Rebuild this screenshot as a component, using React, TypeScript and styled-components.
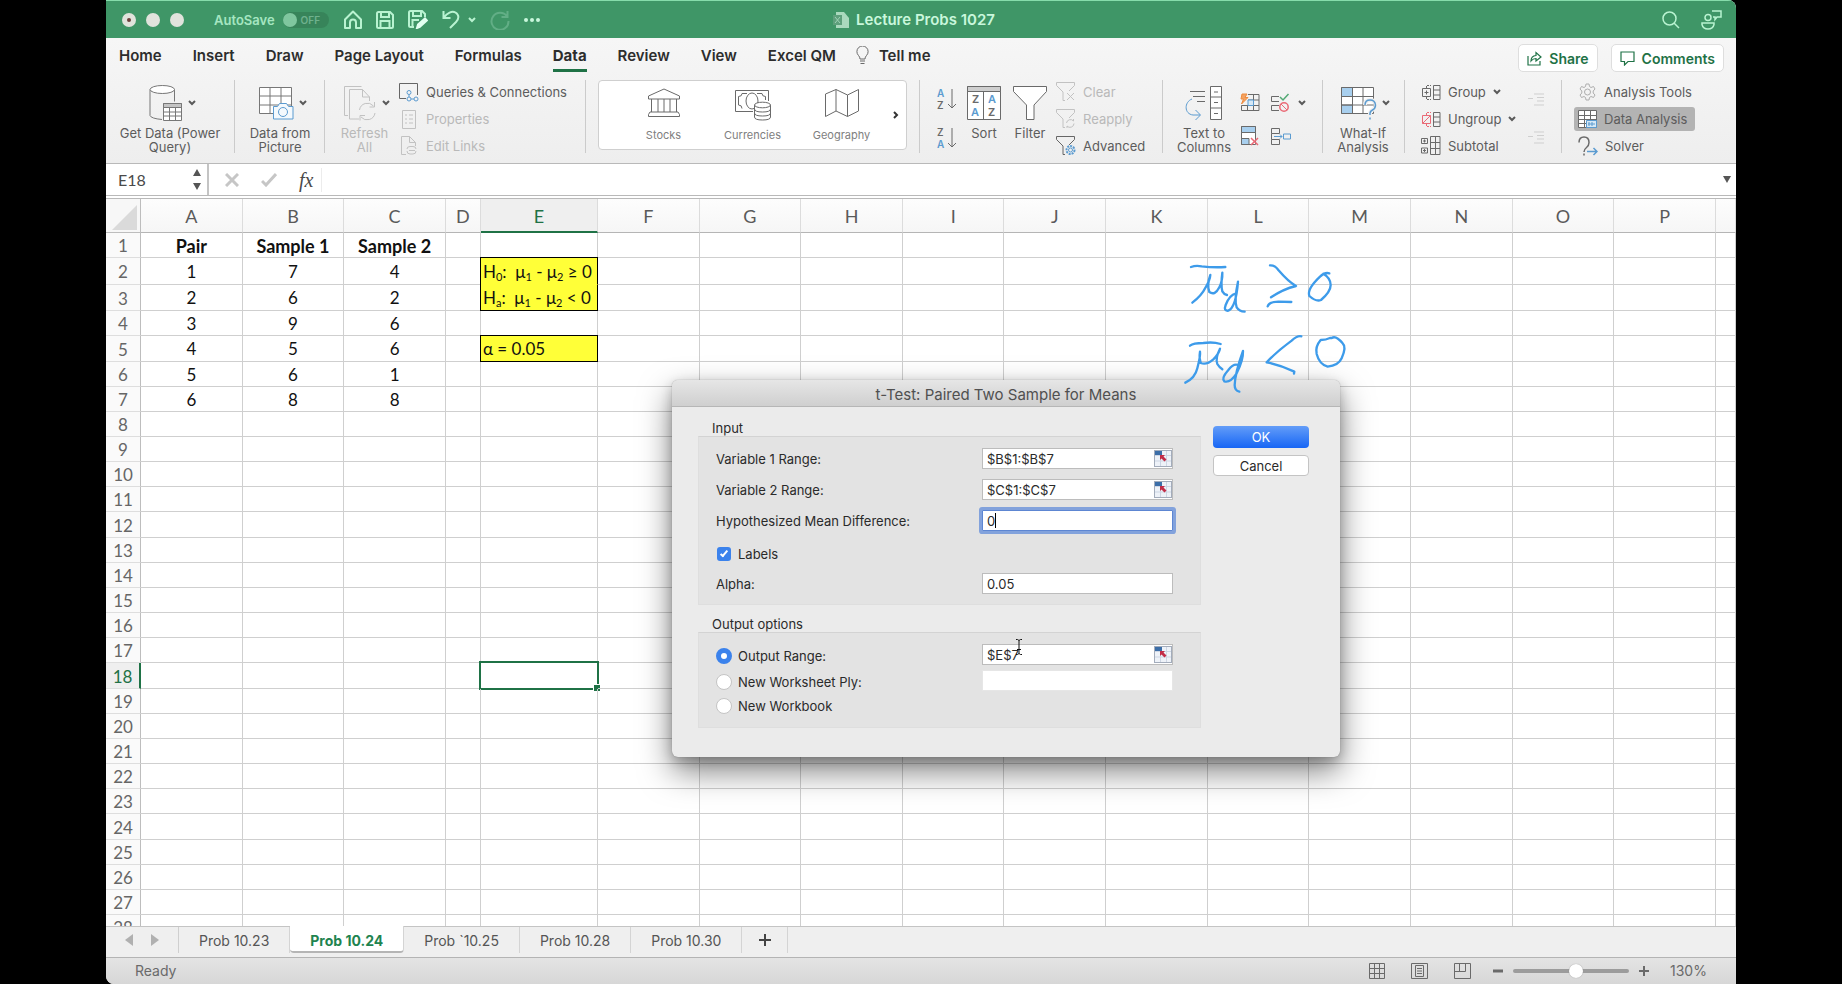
import React from 'react';
import styled, { createGlobalStyle, css } from 'styled-components';

const ui = `Inter, "Liberation Sans", sans-serif`;
const sheetFont = `Lato, "Noto Sans", sans-serif`;
const green = '#1f7246';
const line = '#cfcfcf';
const grey = '#6a6a6a';
const blue = '#5b9bd0';

const GlobalStyle = createGlobalStyle`
  *, *::before, *::after { box-sizing: border-box; }
  body { margin: 0; background: #000; font-family: ${ui}; }
  button, input { font: inherit; color: inherit; }
  button { border: 0; padding: 0; background: none; cursor: default; }
  svg { display: block; flex: none; }
`;

const Stage = styled.div`
  height: 100vh;
  padding: 0 106px;
  background: #000;
`;

const Window = styled.div`
  position: relative;
  display: flex;
  flex-direction: column;
  height: 100%;
  background: #fff;
  overflow: hidden;
  border-radius: 0 8px 0 8px;
`;

/* ---------- title bar ---------- */

const TitleBar = styled.header`
  display: grid;
  grid-template-columns: 1fr auto 1fr;
  align-items: center;
  height: 38px;
  flex: none;
  padding: 0 14px 0 16px;
  background: #3f9667;
  border-top: 1px solid #86dcab;
  color: #c9f7dc;
`;

const TitleGroup = styled.div<{ $end?: boolean; $gap: number }>`
  display: flex;
  align-items: center;
  gap: ${(p) => p.$gap}px;
  justify-content: ${(p) => (p.$end ? 'flex-end' : 'flex-start')};
`;

const Light = styled.button`
  width: 14px;
  height: 14px;
  border-radius: 50%;
  background: #e0e3dc;
  display: grid;
  place-items: center;
`;

const LightDot = styled.i`
  width: 4px;
  height: 4px;
  border-radius: 50%;
  background: #6b3f3a;
`;

const AutoSave = styled.span`
  margin-left: 20px;
  font-size: 13px;
  font-weight: 600;
  color: #a5e6c1;
`;

const Toggle = styled.button`
  display: flex;
  align-items: center;
  gap: 4px;
  width: 46px;
  height: 16px;
  margin: 0 15px 0 8px;
  border-radius: 8px;
  background: #37845a;
  color: #6fb18e;
  font-size: 10px;
  font-weight: 600;
`;

const Knob = styled.i`
  width: 14px;
  height: 14px;
  border-radius: 50%;
  background: #7fc79f;
`;

const DocTitle = styled.h1`
  display: flex;
  align-items: center;
  gap: 7px;
  margin: 0 16px 0 0;
  font-size: 15px;
  font-weight: 600;
`;

const BarButton = styled.button`
  display: flex;
  align-items: center;
`;

/* ---------- ribbon ---------- */

const Ribbon = styled.div`
  flex: none;
  height: 126px;
  background: linear-gradient(#f6f6f6, #eeeeee);
  border-bottom: 1px solid #b9b9b9;
`;

const TabRow = styled.nav`
  display: flex;
  align-items: flex-start;
  gap: 31px;
  height: 42px;
  padding: 0 12px 0 13px;
`;

const RibbonTab = styled.button<{ $active?: boolean }>`
  height: 34px;
  padding-top: 3px;
  border-bottom: 3px solid ${(p) => (p.$active ? green : 'transparent')};
  font-size: 15px;
  font-weight: ${(p) => (p.$active ? 700 : 600)};
  color: #2d2d2d;
`;

const TellMe = styled(RibbonTab)`
  display: flex;
  align-items: center;
  gap: 10px;
  margin-left: -11px;
`;

const TabActions = styled.div`
  display: flex;
  gap: 13px;
  margin-left: auto;
  padding-top: 6px;
`;

const ActionButton = styled.button`
  display: flex;
  align-items: center;
  gap: 7px;
  height: 28px;
  padding: 0 8px;
  border: 1px solid #dedede;
  border-radius: 5px;
  background: #fff;
  color: ${green};
  font-size: 14px;
  font-weight: 600;
`;

const Groups = styled.div`
  display: flex;
  height: 73px;
`;

const Group = styled.section<{ $w?: number; $pad?: number }>`
  display: flex;
  align-items: flex-start;
  flex: ${(p) => (p.$w ? `0 0 ${p.$w}px` : '1 1 auto')};
  padding-left: ${(p) => p.$pad ?? 12}px;
  border-right: ${(p) => (p.$w ? '1px solid #cbcbcb' : '0')};
`;

const BigButton = styled.button<{ $w: number; $dim?: boolean }>`
  display: flex;
  flex-direction: column;
  align-items: center;
  flex: none;
  width: ${(p) => p.$w}px;
  padding-top: 4px;
  font-size: 13px;
  line-height: 14px;
  color: ${(p) => (p.$dim ? '#b9b9b9' : '#5c5c5c')};
`;

const BigIcon = styled.span<{ $chevron?: boolean }>`
  display: flex;
  align-items: center;
  gap: 5px;
  height: 38px;
  margin-bottom: 4px;
  padding-left: ${(p) => (p.$chevron ? 4 : 0)}px;
`;

const SmallList = styled.div`
  display: flex;
  flex-direction: column;
  align-items: flex-start;
  gap: 3px;
`;

const SmallButton = styled.button<{ $dim?: boolean; $on?: boolean }>`
  display: flex;
  align-items: center;
  gap: 7px;
  height: 24px;
  padding: 0 8px 0 4px;
  border-radius: 3px;
  font-size: 13px;
  color: ${(p) => (p.$dim ? '#b9b9b9' : '#5c5c5c')};
  background: ${(p) => (p.$on ? '#b3b3b3' : 'transparent')};
  white-space: nowrap;
`;

const IconColumn = styled.div<{ $top?: number; $gap?: number; $left?: number }>`
  display: flex;
  flex-direction: column;
  gap: ${(p) => p.$gap ?? 13}px;
  padding-top: ${(p) => p.$top ?? 6}px;
  margin-left: ${(p) => p.$left ?? 0}px;
`;

const IconButton = styled.button`
  display: flex;
  align-items: center;
  gap: 8px;
`;

const Gallery = styled.div`
  display: flex;
  align-items: stretch;
  width: 309px;
  height: 70px;
  border: 1px solid #cfcfcf;
  border-radius: 4px;
  background: #fff;
  padding-left: 20px;
`;

const GalleryItem = styled.button`
  display: flex;
  flex-direction: column;
  align-items: center;
  width: 89px;
  padding-top: 6px;
  font-size: 11px;
  line-height: 14px;
  color: #808080;
`;

const GalleryIcon = styled.span`
  display: grid;
  place-items: center;
  height: 32px;
  margin-bottom: 9px;
`;

const GalleryMore = styled.button`
  flex: 1;
  display: grid;
  place-items: center;
  color: #333;
`;

/* ---------- formula bar ---------- */

const FormulaBar = styled.div`
  display: flex;
  align-items: center;
  flex: none;
  height: 35px;
  background: #fff;
  border-bottom: 4px double #b9b9b9;
  color: #4a4a4a;
`;

const NameBox = styled.div`
  display: flex;
  align-items: center;
  justify-content: space-between;
  width: 103px;
  height: 100%;
  padding: 0 6px 0 12px;
  border-right: 2px solid #c4c4c4;
`;

const NameInput = styled.input`
  width: 60px;
  border: 0;
  padding: 0;
  outline: 0;
  background: none;
  font-family: ${sheetFont};
  font-size: 16px;
  line-height: 20px;
`;

const FxTools = styled.div`
  display: flex;
  align-items: center;
  gap: 22px;
  padding: 0 8px 0 16px;
  border-right: 1px solid #ececec;
`;

const Fx = styled.button`
  font-family: "Liberation Serif", serif;
  font-style: italic;
  font-size: 20px;
  line-height: 24px;
`;

const FormulaInput = styled.input`
  flex: 1;
  min-width: 0;
  border: 0;
  outline: 0;
  background: none;
`;

/* ---------- grid ---------- */

const SheetArea = styled.main`
  flex: 1 1 0;
  min-height: 0;
  overflow: hidden;
  background: #fff;
`;

const Sheet = styled.table`
  width: 100%;
  table-layout: fixed;
  border-collapse: separate;
  border-spacing: 0;
  font-family: ${sheetFont};
  font-size: 17px;
  line-height: 20px;
  color: #111;
`;

const Corner = styled.td`
  height: 34px;
  padding: 0;
  border-right: 1px solid #bdbdbd;
  border-bottom: 1px solid #bdbdbd;
  background: #f7f7f7;
`;

const ColHead = styled.th<{ $on?: boolean }>`
  padding: 1px 0 0;
  font-weight: 400;
  font-size: 18px;
  background: ${(p) => (p.$on ? '#efefef' : 'linear-gradient(#fdfdfd, #f6f6f6)')};
  color: ${(p) => (p.$on ? green : '#5a5a5a')};
  border-right: 1px solid #dcdcdc;
  border-bottom: ${(p) => (p.$on ? `2px solid ${green}` : '1px solid #b5b5b5')};
`;

const RowHead = styled.th<{ $on?: boolean }>`
  padding: 2px 0 0;
  font-weight: 400;
  background: ${(p) => (p.$on ? '#efefef' : '#fafafa')};
  color: ${(p) => (p.$on ? green : '#666')};
  border-right: ${(p) => (p.$on ? `2px solid ${green}` : '1px solid #bdbdbd')};
  border-bottom: 1px solid #dedede;
`;

const Row = styled.tr<{ $h: number }>`
  height: ${(p) => p.$h}px;
`;

const Cell = styled.td<{ $bold?: boolean; $note?: boolean; $top?: boolean; $bottom?: boolean }>`
  position: relative;
  padding: 1px 0 0;
  text-align: center;
  white-space: nowrap;
  font-weight: ${(p) => (p.$bold ? 700 : 400)};
  font-size: ${(p) => (p.$bold ? 18 : 17)}px;
  border-right: 1px solid ${line};
  border-bottom: 1px solid ${line};
  ${(p) =>
    p.$note &&
    css`
      padding-left: 2px;
      text-align: left;
      background: #ffff38;
      border-right-color: #000;
      border-bottom-color: ${p.$bottom ? '#000' : '#ffff38'};
      box-shadow: ${p.$top ? '-1px 0 #000, 0 -1px #000, -1px -1px #000' : '-1px 0 #000'};
    `}
  sub {
    font-size: 11px;
    line-height: 0;
    vertical-align: -3px;
  }
`;

const Selection = styled.div`
  position: absolute;
  inset: -2px;
  border: 2px solid ${green};
  &::after {
    content: '';
    position: absolute;
    right: -3px;
    bottom: -3px;
    width: 6px;
    height: 6px;
    background: ${green};
    box-shadow: -1px -1px #fff;
  }
`;

/* ---------- bottom bars ---------- */

const TabStrip = styled.div`
  display: flex;
  align-items: flex-start;
  flex: none;
  height: 31px;
  background: #efefef;
  border-top: 1px solid #c4c4c4;
`;

const TabArrows = styled.div`
  display: flex;
  align-items: center;
  justify-content: center;
  gap: 18px;
  width: 73px;
  height: 26px;
  border-right: 1px solid #cfcfcf;
`;

const SheetTab = styled.button<{ $on?: boolean }>`
  height: ${(p) => (p.$on ? 27 : 26)}px;
  margin-top: ${(p) => (p.$on ? -1 : 0)}px;
  padding: ${(p) => (p.$on ? 3 : 0)}px 20px 0;
  font-size: 14px;
  font-weight: ${(p) => (p.$on ? 700 : 400)};
  color: ${(p) => (p.$on ? '#1f8450' : '#555')};
  background: ${(p) => (p.$on ? '#fff' : 'transparent')};
  border-right: 1px solid #d4d4d4;
  border-bottom: ${(p) => (p.$on ? '2px solid #b5b5b5' : '0')};
  border-radius: ${(p) => (p.$on ? '0 0 4px 4px' : '0')};
`;

const AddTab = styled.button`
  display: grid;
  place-items: center;
  width: 46px;
  height: 26px;
  border-right: 1px solid #d4d4d4;
  color: #444;
`;

const StatusBar = styled.footer`
  display: flex;
  align-items: center;
  flex: none;
  height: 27px;
  padding: 0 29px;
  background: linear-gradient(#e4e4e4, #d7d7d7);
  border-top: 1px solid #b4b4b4;
  color: ${grey};
  font-size: 14px;
  line-height: 16px;
`;

const StatusRight = styled.div`
  display: flex;
  align-items: center;
  margin-left: auto;
`;

const Views = styled.div`
  display: flex;
  gap: 26px;
  margin-right: 22px;
`;

const ZoomRange = styled.input`
  appearance: none;
  width: 116px;
  height: 4px;
  margin: 0 10px;
  border-radius: 2px;
  background: #9c9c9c;
  &::-webkit-slider-thumb {
    appearance: none;
    width: 14px;
    height: 14px;
    border-radius: 50%;
    background: #fff;
    box-shadow: 0 0 1px #888;
  }
`;

const ZoomText = styled.output`
  width: 37px;
  margin-left: 21px;
`;

/* ---------- dialog ---------- */

const Dialog = styled.section`
  position: absolute;
  top: 380px;
  left: 566px;
  width: 668px;
  background: #ebebeb;
  border-radius: 6px;
  box-shadow: 0 0 1px #777, 0 14px 32px rgba(0, 0, 0, 0.5), 0 4px 12px rgba(0, 0, 0, 0.2);
  color: #2a2a2a;
  font-size: 13px;
  line-height: 16px;
`;

const DialogTitle = styled.h2`
  margin: 0;
  height: 27px;
  padding-top: 2px;
  text-align: center;
  font-size: 15px;
  line-height: 25px;
  font-weight: 400;
  color: #505050;
  background: linear-gradient(#e6e6e6, #cfcfcf);
  border-bottom: 1px solid #b6b6b6;
  border-radius: 6px 6px 0 0;
`;

const DialogBody = styled.form`
  display: flex;
  gap: 12px;
  padding: 13px 31px 29px 26px;
`;

const Panels = styled.div`
  flex: 1;
`;

const Panel = styled.fieldset`
  margin: 0 0 11px;
  padding: 0;
  border: 0;
  min-width: 0;
  &:last-child { margin-bottom: 0; }
`;

const PanelTitle = styled.legend`
  padding: 0 0 0 14px;
`;

const PanelBox = styled.div<{ $top: number; $bottom: number }>`
  padding: ${(p) => p.$top}px 27px ${(p) => p.$bottom}px 17px;
  background: #e3e3e3;
  border: 1px solid #dedede;
  border-top-color: #d3d3d3;
`;

const FieldRow = styled.div<{ $h: number }>`
  display: flex;
  align-items: center;
  justify-content: space-between;
  height: ${(p) => p.$h}px;
`;

const OutputGrid = styled.div`
  display: flex;
  justify-content: space-between;
`;

const Stack = styled.div<{ $gap: number }>`
  display: flex;
  flex-direction: column;
  gap: ${(p) => p.$gap}px;
`;

const Field = styled.div<{ $focus?: boolean; $plain?: boolean }>`
  position: relative;
  display: flex;
  align-items: center;
  width: 191px;
  height: 21px;
  background: #fff;
  border: 1px solid ${(p) => (p.$plain ? '#e6e6e6' : '#bcbcbc')};
  ${(p) =>
    p.$focus &&
    css`
      border-color: #5d86d2;
      box-shadow: 0 0 0 3px #82a2dc;
      border-radius: 1px;
    `}
`;

const TextInput = styled.input`
  flex: 1;
  min-width: 0;
  height: 100%;
  padding: 0 4px;
  border: 0;
  outline: 0;
  background: none;
  font-size: 13px;
`;

const Caret = styled.i`
  position: absolute;
  left: 12px;
  top: 2px;
  width: 1px;
  height: 15px;
  background: #000;
`;

const Choice = styled.label`
  display: flex;
  align-items: center;
  gap: 6px;
  height: 20px;
`;

const Check = styled.input`
  appearance: none;
  width: 14px;
  height: 14px;
  margin: 0 1px;
  border-radius: 3px;
  background: #3b82ec;
  display: grid;
  place-items: center;
  &::after {
    content: '';
    width: 4px;
    height: 8px;
    margin-top: -2px;
    border: solid #fff;
    border-width: 0 2px 2px 0;
    transform: rotate(40deg);
  }
`;

const Radio = styled.input`
  appearance: none;
  width: 16px;
  height: 16px;
  margin: 0;
  border-radius: 50%;
  border: 1px solid #c4c4c4;
  background: #fff;
  &:checked {
    border: 5px solid #3b82ec;
  }
`;

const DialogButtons = styled.div`
  display: flex;
  flex-direction: column;
  gap: 7px;
  width: 96px;
  padding-top: 6px;
`;

const PushButton = styled.button<{ $primary?: boolean }>`
  height: ${(p) => (p.$primary ? 22 : 21)}px;
  border-radius: 4px;
  color: ${(p) => (p.$primary ? '#fff' : '#2a2a2a')};
  background: ${(p) => (p.$primary ? 'linear-gradient(#639df8, #1766f5)' : '#fff')};
  border: ${(p) => (p.$primary ? '0' : '1px solid #c4c4c4')};
`;

const Ink = styled.svg`
  position: absolute;
  top: 250px;
  left: 1054px;
  pointer-events: none;
`;

const Pointer = styled.svg`
  position: absolute;
  top: 639px;
  left: 909px;
  pointer-events: none;
`;

/* ---------- drawings ---------- */

type IconProps = { w: number; h: number; c?: string; s?: number; children: React.ReactNode };

const Icon = ({ w, h, c = grey, s = 1, children }: IconProps) => (
  <svg width={w} height={h} viewBox={`0 0 ${w} ${h}`} fill="none" stroke={c} strokeWidth={s} aria-hidden="true">
    {children}
  </svg>
);

const Chevron = ({ c = '#5a5a5a' }: { c?: string }) => (
  <Icon w={8} h={6} c={c} s={2}><path d="M1 1l3 3 3-3" /></Icon>
);

const Triangle = ({ d, w, h, c }: { d: string; w: number; h: number; c: string }) => (
  <svg width={w} height={h} fill={c} aria-hidden="true"><path d={d} /></svg>
);

const Home = () => (
  <Icon w={18} h={20} c="#b9f3d1" s={2}>
    <path d="M1 9.500L9 1.500l8 8V18h-5v-5.500a3 3 0 0 0-6 0V18H1z" strokeLinejoin="round" />
  </Icon>
);
const Save = () => (
  <Icon w={18} h={18} c="#b9f3d1" s={2}>
    <path d="M1 2.500Q1 1 2.500 1H14l3 3v11.500q0 1.500-1.500 1.500h-13Q1 17 1 15.500zM5 1v5h8V1M4.500 17v-7h9v7" />
  </Icon>
);
const SaveEdit = () => (
  <Icon w={20} h={19} c="#b9f3d1" s={2}>
    <path d="M6 17H2.500Q1 17 1 15.500v-13Q1 1 2.500 1H14l3 3v3M5 1v5h8V1M4.500 17v-7H11" />
    <path d="M9 18l1-3.500 7-6 1.800 2-7 6.300z" fill="#e2fff0" stroke="#e2fff0" />
  </Icon>
);
const Undo = () => (
  <Icon w={18} h={19} c="#b9f3d1" s={2}>
    <path d="M1.500 1v7h7M2 7.500C5 3 10 .5 13.500 2.500c4 2.500 3.500 6.500.5 9.500l-6 6" />
  </Icon>
);
const Redo = () => (
  <Icon w={20} h={20} c="#62ae86" s={2}>
    <path d="M17.500 1v6h-6M17 6.500A8.500 8.500 0 1 0 18.500 11" />
  </Icon>
);
const Dots = () => (
  <svg width="16" height="4" fill="#c9f7dc" aria-hidden="true"><circle cx="2" cy="2" r="2" /><circle cx="8" cy="2" r="2" /><circle cx="14" cy="2" r="2" /></svg>
);
const DocIcon = () => (
  <svg width="16" height="18" aria-hidden="true">
    <path d="M3 1h8l5 6v10H3z" fill="#a9d9bd" /><path d="M0 4h9v10H0z" fill="#5d9f7b" />
    <path d="M2 6l5 6M7 6l-5 6" stroke="#9fd3b6" />
  </svg>
);
const Search = () => (
  <Icon w={18} h={18} c="#b9f3d1" s={1.500}><circle cx="7.500" cy="7.500" r="6.500" /><path d="M12 12l5 5" /></Icon>
);
const Presence = () => (
  <Icon w={21} h={20} c="#b9f3d1" s={1.500}>
    <circle cx="7" cy="7.500" r="3" /><path d="M1 13h12v1.500q-1 4.500-6 4.500t-6-4.500z" /><path d="M11 1h9v6h-4l-2 2.500V7h-2" />
  </Icon>
);
const Bulb = () => (
  <Icon w={13} h={19}>
    <path d="M4 13q0-2-1.500-3.500A5.600 5.600 0 1 1 10.500 9.500Q9 11 9 13zM4 15h5M4.500 17.500h4" />
  </Icon>
);
const ShareIcon = () => (
  <Icon w={15} h={15} c={green} s={1.200}>
    <path d="M1 5v9h12v-4M4 10q0-5 5-5.500V1.500L14 6 9 10V7.500Q6 7.500 4 10z" />
  </Icon>
);
const CommentIcon = () => (
  <Icon w={15} h={15} c={green} s={1.200}><path d="M1 1h13v9.500H8L4.500 14v-3.500H1z" /></Icon>
);

const GetData = () => (
  <Icon w={34} h={36} c="#777">
    <path d="M1 4.500v26q1 3 12 4M25.500 4.500v12" /><ellipse cx="13.300" cy="4.500" rx="12.200" ry="4" fill="#fff" />
    <path d="M14.500 18.500h18v17h-18zM14.500 22.500h18M14.500 27h18M14.500 31h18M20.500 22.500v13M26.500 22.500v13" fill="#fff" />
    <path d="M14.500 18.500h18v4h-18z" fill="#c4c4c4" />
  </Icon>
);
const DataPicture = () => (
  <Icon w={36} h={34} c="#777">
    <path d="M1.500 1.500h32v26h-32z" fill="#fff" /><path d="M1.500 10h32M1.500 19h32M12 1.500v26M23 1.500v26" />
    <path d="M15.500 20.500h4l2-3h7l2 3h4.500v12.500H15.500z" fill="#f4f9fd" stroke={blue} /><circle cx="25" cy="26" r="4.500" stroke={blue} />
  </Icon>
);
const RefreshIcon = () => (
  <Icon w={34} h={36} c="#c2c2c2">
    <path d="M5 30.500H1.500V1.500h17" /><path d="M16 34H6.500V4.500h13l7 7.500V16M19.500 4.500V12h7" />
    <path d="M16.500 25a8 8 0 0 1 14-4M31.500 17v5h-5M32 28a8 8 0 0 1-14 4M17 35.500v-5h5" />
  </Icon>
);
const Queries = () => (
  <Icon w={20} h={19} c="#666">
    <path d="M7 15.500H.5V.5h18V12" /><circle cx="10" cy="9.500" r="2" stroke={blue} />
    <circle cx="10" cy="16" r="2" stroke={blue} /><circle cx="17" cy="16" r="2" stroke={blue} /><path d="M10 11.500V14M12 16h3" stroke={blue} />
  </Icon>
);
const Props = () => (
  <Icon w={20} h={19} c="#c2c2c2"><path d="M3.500.5h13v18h-13zM6 5h2M10 5h4M6 9h2M10 9h4M6 13h2M10 13h4" /></Icon>
);
const Links = () => (
  <Icon w={20} h={20} c="#c2c2c2"><path d="M7 18.500H2.500V.5h8l6 6V10M10.500.5v6h6" /><path d="M8 13q0-2.500 3-2.500h3q3 0 3 2.500M8 15q0 3 3 3h3q3 0 3-3M10 14.500h6" /></Icon>
);
const Bank = () => (
  <Icon w={34} h={30}>
    <path d="M17 1L1.500 8v3h31V8zM4.500 11v13M11 11v13M17 11v13M23 11v13M29.500 11v13M3 24h28l1.500 2.500V28.500h-31V26.500z" />
  </Icon>
);
const Money = () => (
  <Icon w={38} h={34}>
    <path d="M19 24.500H1.500v-21h33V14M8 21.500Q8 18 4.500 18V9.500Q8 9.500 8 6.500h5M23 6.500h5q0 3 3.500 3V13" /><ellipse cx="18" cy="14" rx="6" ry="8" />
    <path d="M20.500 18v12q0 3 8 3t8-3V18" fill="#fff" /><ellipse cx="28.500" cy="18" rx="8" ry="2.800" fill="#fff" /><path d="M20.500 22q0 3 8 3t8-3M20.500 26q0 3 8 3t8-3" />
  </Icon>
);
const MapIcon = () => (
  <Icon w={36} h={30}><path d="M1.500 6L12 1.500 23.500 7 34.500 1.500V23L23.500 28.500 12 23 1.500 28.500zM12 1.500V23M23.500 7v21.500" /></Icon>
);

const Letter = ({ x, y, c, t, f = 11 }: { x: number; y: number; c: string; t: string; f?: number }) => (
  <text x={x} y={y} fill={c} stroke="none" fontSize={f} fontWeight="600" fontFamily={ui}>{t}</text>
);
const SortArrow = ({ up }: { up?: boolean }) => (
  <Icon w={21} h={26}>
    <Letter x={1} y={11} c={up ? blue : grey} t={up ? 'A' : 'Z'} f={10} />
    <Letter x={1} y={23} c={up ? grey : blue} t={up ? 'Z' : 'A'} f={10} />
    <path d="M16 3v19M12 18l4 4 4-4" />
  </Icon>
);
const SortIcon = () => (
  <Icon w={34} h={34}>
    <path d="M.5.5h33v33H.5z" fill="#fff" /><path d="M.5.5h33v5H.5z" fill="#cfcfcf" /><path d="M16.500 5.500v28" />
    <Letter x={5} y={17} c={grey} t="Z" /><Letter x={4} y={30} c={blue} t="A" />
    <Letter x={21} y={17} c={blue} t="A" /><Letter x={21} y={30} c={grey} t="Z" />
  </Icon>
);
const FilterIcon = () => (
  <Icon w={34} h={34}><path d="M.5.5h33v5L21 19v14.500h-7.500V19L.5 5.500z" fill="#fff" /></Icon>
);
const SmallFilter = ({ kind }: { kind: 'clear' | 'reapply' | 'advanced' }) => (
  <Icon w={20} h={20} c={kind === 'advanced' ? '#666' : '#c2c2c2'}>
    <path d="M7 18.500V10L.5 3.500v-3h18v3L13 9" /><path d="M7 18.500h2" />
    {kind === 'clear' && <path d="M11 11l7 7M18 11l-7 7" />}
    {kind === 'reapply' && <path d="M10.500 14a4 4 0 0 1 7-2v-2M18 14.500a4 4 0 0 1-7 2.500v2" />}
    {kind === 'advanced' && <><circle cx="14.500" cy="14" r="4" stroke={blue} strokeWidth="2" strokeDasharray="2 1" /><circle cx="14.500" cy="14" r="2" stroke={blue} /></>}
  </Icon>
);
const TextColumns = () => (
  <Icon w={38} h={36}>
    <path d="M5 6.500h15M8 11.500h12M12 16.500h8" /><path d="M25.500 1.500h11v33h-11zM25.500 12h11M25.500 23h11M29 7h4M29 17.500h4M29 28.500h4" fill="#fff" />
    <path d="M7 14C-1 17-1 29 8 30h7M10.500 25l5 5-5 5" stroke={blue} />
  </Icon>
);
const FlashFill = () => (
  <Icon w={20} h={19}>
    <path d="M8 1.500h11v16H1.500v-5h17.500M8 7h11M13.500 1.500v16M7.500 12v5.500" /><path d="M8 7h5.500v5.500H8z" fill="#d6e8f6" stroke={blue} />
    <path d="M7 1H2L1 6h2.500L1.500 11 8 4.500H5z" fill="#f4a261" stroke="#ee8a3c" />
  </Icon>
);
const Validation = () => (
  <Icon w={19} h={19}>
    <path d="M8 3.500H.5v5H8M8 12.500H.5v5H8" /><path d="M9 4l3 3 5.500-6" stroke="#52a974" strokeWidth="1.500" />
    <circle cx="13" cy="14" r="4.200" stroke="#ea6a76" strokeWidth="1.500" /><path d="M10 11l6 6" stroke="#ea6a76" />
  </Icon>
);
const RemoveDup = () => (
  <Icon w={19} h={20}>
    <path d="M1.500.5h14v18h-14z" fill="#fff" /><path d="M1.500.5h14v6h-14zM1.500 12.500H9v6H1.500z" fill="#a8cfee" /><path d="M11 12l7 7M18 12l-7 7" stroke="#ea6a76" strokeWidth="1.500" />
  </Icon>
);
const Consolidate = () => (
  <Icon w={20} h={17}>
    <path d="M.5.5h8v5h-8zM.5 11.500h8v5h-8zM.5 5.500v6" /><path d="M3 8.500h8M9 6.500l2 2-2 2M12.500 6h7v5h-7z" stroke={blue} />
  </Icon>
);
const WhatIf = () => (
  <Icon w={37} h={34}>
    <path d="M1.500 1.500h32v26h-32z" fill="#fff" /><path d="M1.500 1.500h11v9h-11zM1.500 19h11v8.500h-11z" fill="#a8cfee" />
    <path d="M1.500 10.500h32M1.500 19h32M12.500 1.500v26M23 1.500v26" />
    <path d="M25 19q0-5 5-5t5.500 5q0 3.500-3 5t-2.500 5M30 31.500v2" stroke="#f0f0f0" strokeWidth="4" /><path d="M25 19q0-5 5-5t5.500 5q0 3.500-3 5t-2.500 5M30 31.500v2" stroke={blue} strokeWidth="1.500" />
  </Icon>
);
const GroupIcon = ({ un }: { un?: boolean }) => (
  <Icon w={20} h={17}>
    <path d="M12.500 1.500h6.500v14h-6.500zM12.500 6h6.500M12.500 11h6.500" />
    <path d="M1.500 4.500h8v8h-8z" stroke={un ? '#ea6a76' : grey} />
    {un ? <path d="M1.500 12.500l8-8" stroke="#ea6a76" /> : <path d="M3.500 8.500h4M5.500 6.500v4" />}
    <path d="M5.500 4V1.500H10M5.500 13v2.500H10" strokeDasharray="2 1" stroke={un ? '#ea6a76' : grey} />
  </Icon>
);
const SubtotalIcon = () => (
  <Icon w={20} h={20}>
    <path d="M9.500.5h9.500v18H9.500zM9.500 6.500h9.500M9.500 12.500h9.500M14.500.5v18M.5 2.500h6v5h-6zM.5 12h6v5h-6zM2 5h3M3.500 3.500v3M2 14.500h3M3.500 13v3" />
  </Icon>
);
const DetailIcon = () => (
  <Icon w={16} h={13} c="#cfcfcf"><path d="M6 1h10M9 4.500h7M9 8h7M6 12h10M0 5.500h5" /></Icon>
);
const Gear = () => (
  <Icon w={19} h={18} c="#adadad">
    <path d="M7.500 3.500L8 1h3l.5 2.500 1.500 1 2.500-1L17 6l-1.800 2v2L17 12l-1.500 2.500-2.500-1-1.500 1L11 17H8l-.5-2.500-1.500-1-2.500 1L2 12l1.800-2V8L2 6l1.500-2.500 2.500 1z" /><circle cx="9.500" cy="9" r="3" />
  </Icon>
);
const AnalysisIcon = () => (
  <Icon w={19} h={18}>
    <path d="M.5.5h18v17H.5z" fill="#fff" /><path d="M.5 5.500h18M.5 9.500h18M.5 13.500h8M6.500.5v17M12.500.5v9" />
    <path d="M8.500 10.500h10v7h-10zM11 12v4M14 12v4M10 14h7" fill="#d6e8f6" stroke={blue} />
  </Icon>
);
const SolverIcon = () => (
  <Icon w={20} h={20}><path d="M1 6.500q0-5.500 5-5.500t5 5.500q0 3-2.500 5T6 16M6 17.500v2" strokeWidth="1.500" /><path d="M9 15.500h10M15.500 12l3.500 3.500-3.500 3.500" stroke={blue} strokeWidth="1.500" /></Icon>
);
const RangeIcon = () => (
  <svg width="18" height="17" aria-hidden="true">
    <rect x="0.500" y="0.500" width="17" height="16" fill="#eef2f8" stroke="#a3acbb" />
    <path d="M1 5.500h16M1 11h16M6.500 1v15M12.500 1v15" stroke="#cdd6e4" /><rect x="1" y="1" width="7" height="4" fill="#3c6ea8" />
    <path d="M6 5h5l-1.500 1.500 3 3-2 2-3-3L6 10z" fill="#c22d48" />
  </svg>
);

/* ---------- data ---------- */

const columns = 'ABCDEFGHIJKLMNOP'.split('');
const heights: Record<number, number> = { 2: 27, 3: 26, 5: 26, 12: 26, 18: 26, 24: 26 };
const cells: Record<string, React.ReactNode> = {
  A1: 'Pair', B1: 'Sample 1', C1: 'Sample 2',
  A2: 1, B2: 7, C2: 4,
  A3: 2, B3: 6, C3: 2,
  A4: 3, B4: 9, C4: 6,
  A5: 4, B5: 5, C5: 6,
  A6: 5, B6: 6, C6: 1,
  A7: 6, B7: 8, C7: 8,
  E2: <>H<sub>0</sub>:&nbsp; μ<sub>1</sub> - μ<sub>2</sub> ≥ 0</>,
  E3: <>H<sub>a</sub>:&nbsp; μ<sub>1</sub> - μ<sub>2</sub> &lt; 0</>,
  E5: 'α = 0.05',
};
const notes: Record<string, { $top: boolean; $bottom: boolean }> = {
  E2: { $top: true, $bottom: false },
  E3: { $top: false, $bottom: true },
  E5: { $top: true, $bottom: true },
};
const rows = Array.from({ length: 28 }, (_, i) => i + 1);

const RangeField = ({ id, value, label }: { id: string; value: string; label?: string }) => (
  <Field>
    <TextInput id={id} defaultValue={value} aria-label={label} />
    <button type="button" aria-label="Select range"><RangeIcon /></button>
  </Field>
);

export default function App() {
  return (
    <Stage>
      <GlobalStyle />
      <Window>
        <TitleBar>
          <TitleGroup $gap={10}>
            <Light aria-label="Close"><LightDot /></Light>
            <Light aria-label="Minimize" />
            <Light aria-label="Zoom" />
            <TitleGroup $gap={0}>
              <AutoSave>AutoSave</AutoSave>
              <Toggle><Knob />OFF</Toggle>
              <TitleGroup $gap={14}>
                <BarButton aria-label="Home"><Home /></BarButton>
                <BarButton aria-label="Save"><Save /></BarButton>
                <BarButton aria-label="Save as"><SaveEdit /></BarButton>
                <TitleGroup $gap={8}>
                  <BarButton aria-label="Undo"><Undo /></BarButton>
                  <BarButton aria-label="Undo list"><Chevron c="#b9f3d1" /></BarButton>
                </TitleGroup>
                <BarButton aria-label="Redo"><Redo /></BarButton>
                <BarButton aria-label="More"><Dots /></BarButton>
              </TitleGroup>
            </TitleGroup>
          </TitleGroup>
          <DocTitle><DocIcon />Lecture Probs 1027</DocTitle>
          <TitleGroup $end $gap={21}>
            <BarButton aria-label="Search"><Search /></BarButton>
            <BarButton aria-label="Presence"><Presence /></BarButton>
          </TitleGroup>
        </TitleBar>

        <Ribbon>
          <TabRow>
            {['Home', 'Insert', 'Draw', 'Page Layout', 'Formulas', 'Data', 'Review', 'View', 'Excel QM'].map((t) => (
              <RibbonTab key={t} $active={t === 'Data'}>{t}</RibbonTab>
            ))}
            <TellMe><Bulb />Tell me</TellMe>
            <TabActions>
              <ActionButton><ShareIcon />Share</ActionButton>
              <ActionButton><CommentIcon />Comments</ActionButton>
            </TabActions>
          </TabRow>
          <Groups>
            <Group $w={129} $pad={11}>
              <BigButton $w={106}><BigIcon $chevron><GetData /><Chevron /></BigIcon>Get Data (Power Query)</BigButton>
            </Group>
            <Group $w={90} $pad={8}>
              <BigButton $w={74}><BigIcon $chevron><DataPicture /><Chevron /></BigIcon>Data from Picture</BigButton>
            </Group>
            <Group $w={261} $pad={9}>
              <BigButton $w={61} $dim><BigIcon $chevron><RefreshIcon /><Chevron /></BigIcon>Refresh<br />All</BigButton>
              <SmallList>
                <SmallButton><Queries />Queries &amp; Connections</SmallButton>
                <SmallButton $dim><Props />Properties</SmallButton>
                <SmallButton $dim><Links />Edit Links</SmallButton>
              </SmallList>
            </Group>
            <Group $w={334}>
              <Gallery>
                <GalleryItem><GalleryIcon><Bank /></GalleryIcon>Stocks</GalleryItem>
                <GalleryItem><GalleryIcon><Money /></GalleryIcon>Currencies</GalleryItem>
                <GalleryItem><GalleryIcon><MapIcon /></GalleryIcon>Geography</GalleryItem>
                <GalleryMore aria-label="More data types"><Icon w={6} h={8} c="#333" s={2}><path d="M1 1l3 3-3 3" /></Icon></GalleryMore>
              </Gallery>
            </Group>
            <Group $w={243} $pad={16}>
              <IconColumn>
                <IconButton aria-label="Sort ascending"><SortArrow up /></IconButton>
                <IconButton aria-label="Sort descending"><SortArrow /></IconButton>
              </IconColumn>
              <BigButton $w={54}><BigIcon><SortIcon /></BigIcon>Sort</BigButton>
              <BigButton $w={38}><BigIcon><FilterIcon /></BigIcon>Filter</BigButton>
              <IconColumn $top={0} $left={3}>
                <SmallList>
                  <SmallButton $dim><SmallFilter kind="clear" />Clear</SmallButton>
                  <SmallButton $dim><SmallFilter kind="reapply" />Reapply</SmallButton>
                  <SmallButton><SmallFilter kind="advanced" />Advanced</SmallButton>
                </SmallList>
              </IconColumn>
            </Group>
            <Group $w={160} $pad={12}>
              <BigButton $w={58}><BigIcon><TextColumns /></BigIcon>Text to Columns</BigButton>
              <IconColumn $top={13} $gap={14} $left={7}>
                <IconButton aria-label="Flash fill"><FlashFill /></IconButton>
                <IconButton aria-label="Remove duplicates"><RemoveDup /></IconButton>
              </IconColumn>
              <IconColumn $top={13} $gap={16} $left={11}>
                <IconButton aria-label="Data validation"><Validation /><Chevron /></IconButton>
                <IconButton aria-label="Consolidate"><Consolidate /></IconButton>
              </IconColumn>
            </Group>
            <Group $w={82} $pad={7}>
              <BigButton $w={66}><BigIcon $chevron><WhatIf /><Chevron /></BigIcon>What-If Analysis</BigButton>
            </Group>
            <Group $w={157}>
              <SmallList>
                <SmallButton><GroupIcon />Group<Chevron /></SmallButton>
                <SmallButton><GroupIcon un />Ungroup<Chevron /></SmallButton>
                <SmallButton><SubtotalIcon />Subtotal</SmallButton>
              </SmallList>
              <IconColumn $top={13} $gap={25} $left={4}>
                <IconButton aria-label="Show detail"><DetailIcon /></IconButton>
                <IconButton aria-label="Hide detail"><DetailIcon /></IconButton>
              </IconColumn>
            </Group>
            <Group>
              <SmallList>
                <SmallButton><Gear />Analysis Tools</SmallButton>
                <SmallButton $on><AnalysisIcon />Data Analysis</SmallButton>
                <SmallButton><SolverIcon />Solver</SmallButton>
              </SmallList>
            </Group>
          </Groups>
        </Ribbon>

        <FormulaBar>
          <NameBox>
            <NameInput defaultValue="E18" aria-label="Name box" />
            <IconButton aria-label="Step"><Triangle w={8} h={21} c="#555" d="M0 7l4-7 4 7zM0 14h8l-4 7z" /></IconButton>
          </NameBox>
          <FxTools>
            <IconButton aria-label="Cancel entry"><Icon w={14} h={14} c="#c6c6c6" s={3}><path d="M1 1l12 12M13 1L1 13" /></Icon></IconButton>
            <IconButton aria-label="Accept entry"><Icon w={16} h={14} c="#c6c6c6" s={3}><path d="M1 8l4 4L15 1" /></Icon></IconButton>
            <Fx aria-label="Insert function">fx</Fx>
          </FxTools>
          <FormulaInput aria-label="Formula" />
          <IconButton aria-label="Expand formula bar"><Triangle w={14} h={7} c="#555" d="M1 0h8l-4 7z" /></IconButton>
        </FormulaBar>

        <SheetArea>
          <Sheet>
            <colgroup>
              <col style={{ width: 35 }} />
              {columns.map((c) => <col key={c} style={c === 'D' ? { width: 35 } : c === 'E' ? { width: 117 } : undefined} />)}
              <col style={{ width: 20 }} />
            </colgroup>
            <thead>
              <tr>
                <Corner><svg width="34" height="32" aria-hidden="true"><path d="M31 5v25H6z" fill="#dadada" /></svg></Corner>
                {columns.map((c) => <ColHead key={c} scope="col" $on={c === 'E'}>{c}</ColHead>)}
                <ColHead aria-label="Next column" />
              </tr>
            </thead>
            <tbody>
              {rows.map((r) => (
                <Row key={r} $h={heights[r] ?? 25}>
                  <RowHead scope="row" $on={r === 18}>{r}</RowHead>
                  {columns.map((c) => {
                    const key = c + r;
                    return (
                      <Cell key={key} $bold={r === 1} $note={key in notes} {...notes[key]}>
                        {cells[key]}
                        {key === 'E18' && <Selection />}
                      </Cell>
                    );
                  })}
                  <Cell />
                </Row>
              ))}
            </tbody>
          </Sheet>
        </SheetArea>

        <TabStrip>
          <TabArrows>
            <IconButton aria-label="Previous sheet"><Triangle w={8} h={12} c="#b0b0b0" d="M8 0v12L0 6z" /></IconButton>
            <IconButton aria-label="Next sheet"><Triangle w={8} h={12} c="#b0b0b0" d="M0 0v12l8-6z" /></IconButton>
          </TabArrows>
          {['Prob 10.23', 'Prob 10.24', 'Prob `10.25', 'Prob 10.28', 'Prob 10.30'].map((t) => (
            <SheetTab key={t} $on={t === 'Prob 10.24'}>{t}</SheetTab>
          ))}
          <AddTab aria-label="Add sheet"><Icon w={12} h={12} c="#444" s={2}><path d="M6 0v12M0 6h12" /></Icon></AddTab>
        </TabStrip>

        <StatusBar>
          Ready
          <StatusRight>
            <Views>
              <IconButton aria-label="Normal view"><Icon w={16} h={16}><path d="M.5.5h15v15H.5zM.5 5.500h15M.5 10.500h15M5.500.5v15M10.500.5v15" /></Icon></IconButton>
              <IconButton aria-label="Page layout view"><Icon w={17} h={16}><path d="M.5.5h16v15H.5zM4.500 2.500h8v11h-8zM6 5.500h5M6 8h5M6 10.500h5" /></Icon></IconButton>
              <IconButton aria-label="Page break view"><Icon w={17} h={16}><path d="M.5.5h16v15H.5zM.5 8.500h11v-8M5.500.5v8" /></Icon></IconButton>
            </Views>
            <IconButton aria-label="Zoom out"><Icon w={10} h={10} s={3}><path d="M0 5h10" /></Icon></IconButton>
            <ZoomRange type="range" min={0} max={100} defaultValue={55} aria-label="Zoom" />
            <IconButton aria-label="Zoom in"><Icon w={10} h={10} s={2}><path d="M0 5h10M5 0v10" /></Icon></IconButton>
            <ZoomText>130%</ZoomText>
          </StatusRight>
        </StatusBar>

        <Dialog role="dialog" aria-labelledby="dialog-title">
          <DialogTitle id="dialog-title">t-Test: Paired Two Sample for Means</DialogTitle>
          <DialogBody>
            <Panels>
              <Panel>
                <PanelTitle>Input</PanelTitle>
                <PanelBox $top={6} $bottom={8}>
                  <FieldRow $h={31}><label htmlFor="variable-1">Variable 1 Range:</label><RangeField id="variable-1" value="$B$1:$B$7" /></FieldRow>
                  <FieldRow $h={31}><label htmlFor="variable-2">Variable 2 Range:</label><RangeField id="variable-2" value="$C$1:$C$7" /></FieldRow>
                  <FieldRow $h={31}>
                    <label htmlFor="mean">Hypothesized Mean Difference:</label>
                    <Field $focus><TextInput id="mean" defaultValue="0" /><Caret /></Field>
                  </FieldRow>
                  <FieldRow $h={35}><Choice><Check type="checkbox" defaultChecked />Labels</Choice></FieldRow>
                  <FieldRow $h={25}><label htmlFor="alpha">Alpha:</label><Field><TextInput id="alpha" defaultValue="0.05" /></Field></FieldRow>
                </PanelBox>
              </Panel>
              <Panel>
                <PanelTitle>Output options</PanelTitle>
                <PanelBox $top={11} $bottom={11}>
                  <OutputGrid>
                    <Stack $gap={4}>
                      <FieldRow $h={24}><Choice><Radio type="radio" name="output" defaultChecked />Output Range:</Choice></FieldRow>
                      <Choice><Radio type="radio" name="output" />New Worksheet Ply:</Choice>
                      <Choice><Radio type="radio" name="output" />New Workbook</Choice>
                    </Stack>
                    <Stack $gap={5}>
                      <RangeField id="output-range" value="$E$7" label="Output range" />
                      <Field $plain><TextInput aria-label="New worksheet name" /></Field>
                    </Stack>
                  </OutputGrid>
                </PanelBox>
              </Panel>
            </Panels>
            <DialogButtons>
              <PushButton type="button" $primary>OK</PushButton>
              <PushButton type="button">Cancel</PushButton>
            </DialogButtons>
          </DialogBody>
        </Dialog>

        <Ink width="240" height="180" viewBox="0 0 720 540" fill="none" stroke="#3d9bea" strokeWidth="7" strokeLinecap="round" strokeLinejoin="round" aria-hidden="true">
          <path d="M93 51Q108 45 125 49Q160 53 196 51" />
          <path d="M97 158Q125 137 137 112Q150 90 151 75Q140 105 148 126Q165 138 178 112Q188 92 187 68Q182 105 187 124Q192 133 201 135" />
          <path d="M228 130Q208 135 197 165Q190 184 205 182Q228 172 234 95Q222 150 230 172Q238 184 254 185" />
          <path d="M330 46Q345 45 355 60Q385 95 408 108Q370 117 333 142" />
          <path d="M323 169Q328 155 355 155L394 156" />
          <path d="M508 70Q494 66 480 80Q440 118 448 138Q468 156 483 150Q512 125 512 105Q512 84 490 71" />
          <path d="M90 287Q100 279 130 279Q160 275 182 282" />
          <path d="M76 398Q105 385 112 355Q122 315 120 305Q117 325 122 339Q140 346 160 328Q178 310 180 296Q165 325 172 342Q178 352 187 358" />
          <path d="M234 345Q220 340 205 360Q183 385 193 394Q210 400 230 370Q250 330 249 303Q225 370 224 405Q224 422 238 425" />
          <path d="M424 259Q412 256 395 272Q350 305 320 337Q360 345 403 365L402 371" />
          <path d="M510 264Q498 270 482 270Q465 290 470 312Q478 343 503 350Q535 347 545 325Q560 290 548 280Q528 255 515 264Z" />
        </Ink>

        <Pointer width="8" height="16" fill="none" stroke="#111" aria-hidden="true">
          <path d="M1 .5h1.500l1.500 1 1.500-1H7M4 1.500v13M1 15.500h1.500l1.500-1 1.500 1H7M2 10.500h4" />
        </Pointer>
      </Window>
    </Stage>
  );
}
